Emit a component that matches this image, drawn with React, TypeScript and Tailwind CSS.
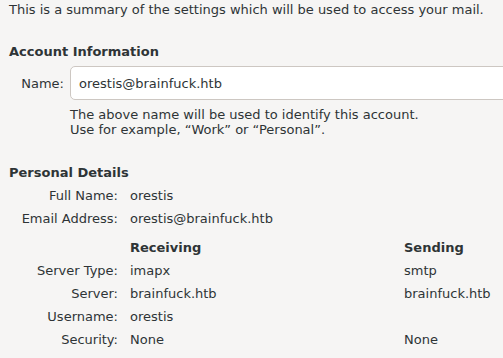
import React from 'react';

const rows = [
  { label: 'Server Type:', recv: 'imapx', send: 'smtp' },
  { label: 'Server:', recv: 'brainfuck.htb', send: 'brainfuck.htb' },
  { label: 'Username:', recv: 'orestis', send: '' },
  { label: 'Security:', recv: 'None', send: 'None' },
];

export default function App() {
  return (
    <div
      className="w-[503px] h-[358px] overflow-hidden bg-[#f6f5f4] text-[#2e3436] text-[13px] leading-[15px]"
      style={{ fontFamily: '"DejaVu Sans", sans-serif' }}
    >
      <p className="pt-[2px] pl-[9px] whitespace-nowrap">
        This is a summary of the settings which will be used to access your mail.
      </p>

      <h2 className="mt-[27px] pl-[9px] font-bold">Account Information</h2>
      <div className="mt-[7px] flex items-center">
        <label className="w-[64px] shrink-0 text-right">Name:</label>
        <input
          className="ml-[6px] h-[34px] w-[460px] shrink-0 rounded-[5px] border border-[#cdc7c2] bg-white pl-[8px] outline-none"
          defaultValue="orestis@brainfuck.htb"
        />
      </div>
      <div className="mt-[7px] pl-[70px]">
        <p>The above name will be used to identify this account.</p>
        <p>Use for example, “Work” or “Personal”.</p>
      </div>

      <h2 className="mt-[28px] pl-[9px] font-bold">Personal Details</h2>
      <div className="mt-[8px] grid grid-cols-[118px_262px_1fr] gap-x-[12px] gap-y-[8px] whitespace-nowrap">
        <span className="text-right">Full Name:</span>
        <span className="col-span-2">orestis</span>
        <span className="text-right">Email Address:</span>
        <span className="col-span-2">orestis@brainfuck.htb</span>

        <span className="mt-[6px]"></span>
        <span className="mt-[6px] font-bold">Receiving</span>
        <span className="mt-[6px] font-bold">Sending</span>

        {rows.map((r) => (
          <React.Fragment key={r.label}>
            <span className="text-right">{r.label}</span>
            <span>{r.recv}</span>
            <span>{r.send}</span>
          </React.Fragment>
        ))}
      </div>
    </div>
  );
}
